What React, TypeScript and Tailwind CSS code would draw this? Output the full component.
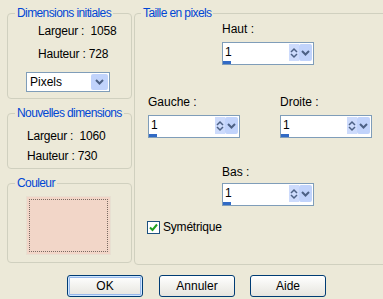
import React from 'react';

const legend = 'text-[#0046d5] text-[12px] leading-[14px] tracking-[-0.6px] px-[2px]';
const group = 'border border-[#d0d0bf] rounded-[4px] px-0';

function Chevron() {
  return (
    <svg width="9" height="6" viewBox="0 0 9 6">
      <path d="M1 1 L4.5 4.5 L8 1" stroke="#4d6185" strokeWidth="2" fill="none" />
    </svg>
  );
}

function UpDown() {
  return (
    <svg width="8" height="12" viewBox="0 0 8 12">
      <path d="M1 5 L4 2 L7 5" stroke="#4d6185" strokeWidth="1.5" fill="none" />
      <path d="M1 7 L4 10 L7 7" stroke="#4d6185" strokeWidth="1.5" fill="none" />
    </svg>
  );
}

function Spin({ value }: { value: string }) {
  return (
    <div className="w-[92px] h-[23px] border border-[#7f9db9] bg-white flex flex-col">
      <div className="flex h-[18px]">
        <div className="flex-1 pl-[2px] leading-[18px]">{value}</div>
        <div className="w-[10px] mt-[1px] bg-[#cddbfc] flex items-center justify-center">
          <UpDown />
        </div>
        <div className="w-[13px] mt-[1px] mr-[1px] bg-[#c1d3fb] rounded-[2px] flex items-center justify-center">
          <Chevron />
        </div>
      </div>
      <div className="h-[3px] flex">
        <div className="w-[8px] bg-[#316ac5]" />
      </div>
    </div>
  );
}

function Button({ label, isDefault }: { label: string; isDefault?: boolean }) {
  return (
    <button
      className={`w-[76px] h-[22px] border border-[#003c74] rounded-[3px] bg-gradient-to-b from-white to-[#e6e5de] text-[12px] leading-[20px] ${
        isDefault ? 'shadow-[inset_0_0_0_1px_#cee7ff,inset_0_0_0_2px_#98b8ea]' : ''
      }`}
    >
      {label}
    </button>
  );
}

export default function App() {
  return (
    <div className="w-[383px] h-[299px] overflow-hidden bg-[#ece9d8] text-black text-[12px] leading-[14px] font-['Liberation_Sans',Arial,sans-serif] pt-[6px] pl-[7px]">
      <div className="flex h-[259px]">
        <div className="w-[125px] shrink-0 flex flex-col gap-[7px]">
          <fieldset className={`${group} h-[93px]`}>
            <legend className={`${legend} ml-[7px]`}>Dimensions initiales</legend>
            <div className="pl-[30px] mt-[4px] tracking-[-0.2px]">Largeur :&nbsp; 1058</div>
            <div className="pl-[30px] mt-[9px] tracking-[-0.2px]">Hauteur : 728</div>
            <div className="ml-[18px] mt-[11px] w-[84px] h-[20px] border border-[#7f9db9] bg-white flex">
              <div className="flex-1 pl-[3px] leading-[18px]">Pixels</div>
              <div className="w-[17px] my-[1px] mr-[1px] bg-[#c1d3fb] rounded-[2px] flex items-center justify-center">
                <Chevron />
              </div>
            </div>
          </fieldset>

          <fieldset className={`${group} h-[63px]`}>
            <legend className={`${legend} ml-[7px]`}>Nouvelles dimensions</legend>
            <div className="pl-[19px] mt-[9px] tracking-[-0.2px]">Largeur :&nbsp; 1060</div>
            <div className="pl-[19px] mt-[6px] tracking-[-0.2px]">Hauteur : 730</div>
          </fieldset>

          <fieldset className={`${group} h-[87px]`}>
            <legend className={`${legend} ml-[7px]`}>Couleur</legend>
            <div className="ml-[18px] mt-[6px] w-[85px] h-[59px] bg-[#f2d6c8] border border-[#e8e0d2] p-[2px]">
              <div className="h-full border border-dotted border-[#7a6a62]" />
            </div>
          </fieldset>
        </div>

        <fieldset className={`${group} ml-[2px] w-[262px] shrink-0 h-[259px]`}>
          <legend className={`${legend} ml-[6px]`}>Taille en pixels</legend>
          <div className="ml-[87px] mt-[2px]">Haut :</div>
          <div className="ml-[87px] mt-[6px]">
            <Spin value="1" />
          </div>

          <div className="flex mt-[30px] ml-[13px] gap-[40px]">
            <div>
              <div>Gauche :</div>
              <div className="mt-[6px]">
                <Spin value="1" />
              </div>
            </div>
            <div>
              <div>Droite :</div>
              <div className="mt-[6px]">
                <Spin value="1" />
              </div>
            </div>
          </div>

          <div className="ml-[87px] mt-[27px]">Bas :</div>
          <div className="ml-[87px] mt-[4px]">
            <Spin value="1" />
          </div>

          <label className="flex items-center ml-[12px] mt-[14px] gap-[3px]">
            <span className="w-[13px] h-[13px] border border-[#1c5180] bg-white flex items-center justify-center">
              <svg width="9" height="9" viewBox="0 0 9 9">
                <path d="M1 4.5 L3.5 7 L8 1.5" stroke="#21a121" strokeWidth="2" fill="none" />
              </svg>
            </span>
            <span className="tracking-[-0.2px]">Symétrique</span>
          </label>
        </fieldset>
      </div>

      <div className="flex mt-[10px] ml-[60px]">
        <Button label="OK" isDefault />
        <div className="ml-[16px]">
          <Button label="Annuler" />
        </div>
        <div className="ml-[15px]">
          <Button label="Aide" />
        </div>
      </div>
    </div>
  );
}
